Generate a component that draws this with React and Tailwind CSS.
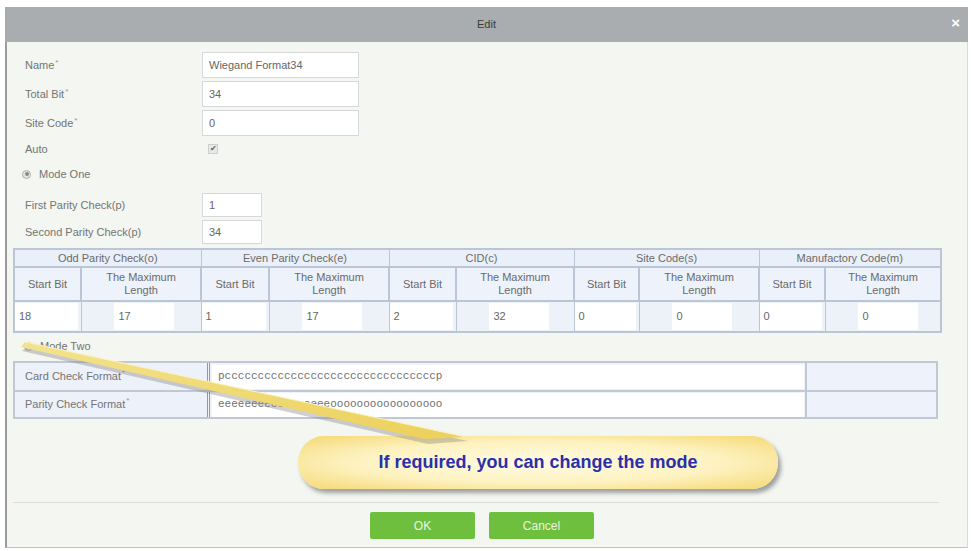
const font = { fontFamily: '"Liberation Sans", Arial, sans-serif' };

const groups = [
  { title: "Odd Parity Check(o)", start: "18", len: "17", w: [67, 120] },
  { title: "Even Parity Check(e)", start: "1", len: "17", w: [68, 120] },
  { title: "CID(c)", start: "2", len: "32", w: [67, 118] },
  { title: "Site Code(s)", start: "0", len: "0", w: [65, 120] },
  { title: "Manufactory Code(m)", start: "0", len: "0", w: [66, 116] },
];

const Req = () => <sup className="text-[8px] text-[#999] ml-px">*</sup>;

const FieldRow = ({ label, required, children, h = "h-[26px]" }) => (
  <div className={`flex items-center ${h}`}>
    <div className="w-[189px] pl-3 text-[11px] text-[#747474]">
      {label}
      {required && <Req />}
    </div>
    {children}
  </div>
);

const TextBox = ({ value, className = "" }) => (
  <div
    className={`bg-white border border-[#d6d8da] px-1.5 flex items-center text-[11px] text-[#666] ${className}`}
  >
    {value}
  </div>
);

const Radio = ({ checked }) => (
  <span className="w-[9px] h-[9px] rounded-full border border-[#b0b0b0] bg-[#e6e6e6] flex items-center justify-center">
    {checked && <span className="w-[4px] h-[4px] rounded-full bg-[#888]" />}
  </span>
);

const Beam = () => (
  <svg
    className="absolute left-0 top-0 pointer-events-none"
    width="971"
    height="551"
    viewBox="0 0 971 551"
  >
    <defs>
      <linearGradient id="beamFill" x1="0" y1="0" x2="1" y2="1">
        <stop offset="0" stopColor="#f3e38e" />
        <stop offset="1" stopColor="#ecd05a" />
      </linearGradient>
    </defs>
    <polygon points="27,347 468,441 428,444 22,351" fill="#8a8a8a" opacity="0.4" />
    <polygon points="25,342 466,437 424,439 21,347" fill="url(#beamFill)" />
    <polyline points="25,342 466,437" stroke="#faf1c0" strokeWidth="1" fill="none" />
  </svg>
);

export default function App() {
  return (
    <div className="w-[971px] h-[551px] bg-white relative overflow-hidden" style={font}>
      <div className="ml-[5px] mt-[7px] w-[963px] flex flex-col">
        {/* title bar */}
        <div className="h-[35px] bg-[#a9adb0] flex items-center relative">
          <div className="flex-1 text-center text-[11px] text-[#3a3a3a]">Edit</div>
          <span className="absolute right-[8px] top-[8px] text-white text-[15px] font-bold leading-none">
            ×
          </span>
        </div>

        {/* body */}
        <div className="bg-[#f3f6f1] border-l-2 border-[#9c9c9c] border-r border-r-[#d8dad6] border-b border-b-[#bfc1bd] h-[506px] pl-[6px] pr-[28px] flex flex-col">
          <div className="pt-[10px] flex flex-col gap-[3px]">
            <FieldRow label="Name" required>
              <TextBox value="Wiegand Format34" className="w-[157px] h-[26px]" />
            </FieldRow>
            <FieldRow label="Total Bit" required>
              <TextBox value="34" className="w-[157px] h-[26px]" />
            </FieldRow>
            <FieldRow label="Site Code" required>
              <TextBox value="0" className="w-[157px] h-[26px]" />
            </FieldRow>
          </div>
          <FieldRow label="Auto">
            <span className="ml-[6px] w-[10px] h-[10px] border border-[#cfcfcf] bg-[#e8e8e8] flex items-center justify-center text-[8px] text-[#666] leading-none">
              ✔
            </span>
          </FieldRow>
          <div className="h-[24px] flex items-center gap-[8px] pl-[9px] text-[11px] text-[#747474]">
            <Radio checked />
            Mode One
          </div>
          <div className="mt-[7px] flex flex-col gap-[3px]">
            <FieldRow label="First Parity Check(p)" h="h-[24px]">
              <TextBox value="1" className="w-[60px] h-[24px]" />
            </FieldRow>
            <FieldRow label="Second Parity Check(p)" h="h-[24px]">
              <TextBox value="34" className="w-[60px] h-[24px]" />
            </FieldRow>
          </div>

          {/* bit layout table */}
          <table className="mt-[4px] w-[927px] table-fixed border-collapse border-2 border-[#bac5d6] text-[11px] text-[#6a6a6a]">
            <colgroup>
              {groups.map((g) => [
                <col key={g.title + "a"} style={{ width: g.w[0] }} />,
                <col key={g.title + "b"} style={{ width: g.w[1] }} />,
              ])}
            </colgroup>
            <tbody>
              <tr className="h-[18px] bg-[#eaf0fa]">
                {groups.map((g) => (
                  <td key={g.title} colSpan={2} className="border border-[#bac5d6] text-center leading-none">
                    {g.title}
                  </td>
                ))}
              </tr>
              <tr className="h-[34px] bg-[#eef2fa]">
                {groups.map((g) => [
                  <td key={g.title + "s"} className="border-2 border-[#bac5d6] text-center">
                    Start Bit
                  </td>,
                  <td key={g.title + "m"} className="border-2 border-[#bac5d6] text-center leading-[13px]">
                    The Maximum
                    <br />
                    Length
                  </td>,
                ])}
              </tr>
              <tr className="h-[30px] bg-[#edf1f8]">
                {groups.map((g) => [
                  <td key={g.title + "s"} className="border border-[#bac5d6] p-0 pr-[3px] py-[1px]">
                    <div className="bg-white h-[27px] flex items-center pl-[4px] text-[#666]">{g.start}</div>
                  </td>,
                  <td key={g.title + "m"} className="border border-[#bac5d6] p-0 py-[1px]">
                    <div className="ml-[32px] w-[60px] bg-white h-[27px] flex items-center pl-[5px] text-[#666]">
                      {g.len}
                    </div>
                  </td>,
                ])}
              </tr>
            </tbody>
          </table>

          <div className="h-[27px] flex items-center gap-[7px] pl-[11px] text-[11px] text-[#747474]">
            <Radio />
            Mode Two
          </div>

          {/* format strings */}
          <div className="mt-[1px] w-[925px] border-2 border-[#c0c8d6] text-[11px] text-[#747474]">
            {[
              ["Card Check Format", "p" + "c".repeat(32) + "p"],
              ["Parity Check Format", "e".repeat(17) + "o".repeat(17)],
            ].map(([label, value], i) => (
              <div key={label} className={`flex h-[27px] ${i ? "border-t-2 border-[#c0c8d6]" : ""}`}>
                <div className="w-[192px] bg-[#edf1f9] flex items-center pl-[10px]">
                  {label}
                  <Req />
                </div>
                <div className="w-[598px] border-l-[3px] border-double border-[#8d9aad] bg-[#f1f3f6] flex items-center pl-[2px]">
                  <div
                    className="w-[592px] h-[24px] bg-white flex items-center pl-[6px] text-[#707070] text-[11px]"
                    style={{ fontFamily: '"Liberation Mono", monospace' }}
                  >
                    {value}
                  </div>
                </div>
                <div className="flex-1 border-l-2 border-[#c0c8d6] bg-[#eef2fb]" />
              </div>
            ))}
          </div>

          {/* hint */}
          <div className="mt-[17px] ml-[285px] w-[480px] h-[53px] rounded-[26px] bg-[radial-gradient(ellipse_at_center,#fefbe6_0%,#fdf2bf_55%,#f5d872_100%)] shadow-[3px_4px_4px_rgba(90,90,90,0.55)] flex items-center justify-center">
            <span className="text-[18px] font-bold text-[#2b30a8]">
              If required, you can change the mode
            </span>
          </div>

          <div className="mt-[13px] border-t border-[#dcdcdc]" />
          <div className="flex justify-center gap-[14px] pt-[9px] ml-[12px]">
            <button className="w-[105px] h-[27px] rounded-[2px] bg-[#6fbf3f] text-[#e8f5df] text-[12px]">
              OK
            </button>
            <button className="w-[105px] h-[27px] rounded-[2px] bg-[#6fbf3f] text-[#e8f5df] text-[12px]">
              Cancel
            </button>
          </div>
        </div>
      </div>
      <Beam />
    </div>
  );
}
